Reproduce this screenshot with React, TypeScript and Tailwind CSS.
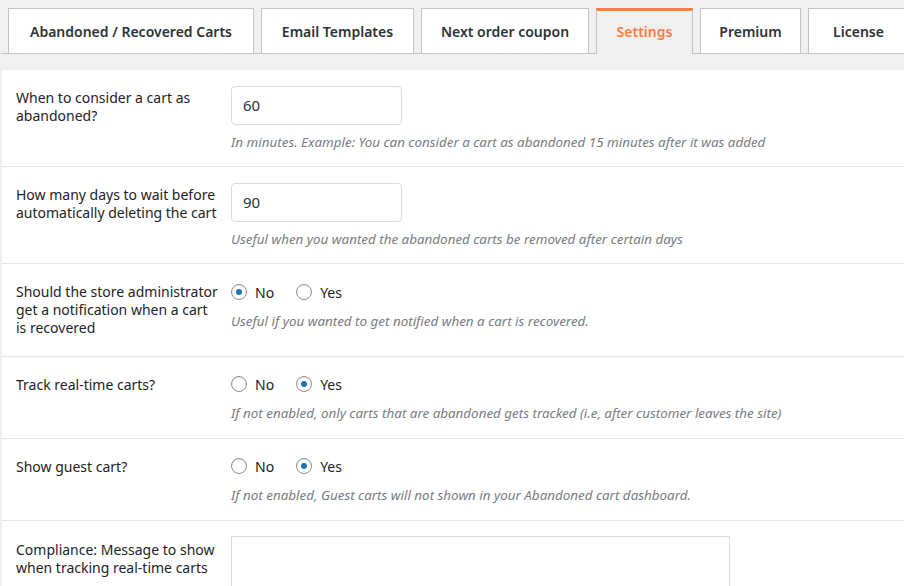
import React from "react";

const font = { fontFamily: '"Noto Sans", "Liberation Sans", sans-serif' };

function Radio({ checked, label }: { checked: boolean; label: string }) {
  return (
    <span className="flex items-center gap-2">
      <span className="w-4 h-4 rounded-full border border-[#8c8f94] bg-white flex items-center justify-center shadow-[inset_0_1px_2px_rgba(0,0,0,0.1)]">
        {checked && <span className="w-[6px] h-[6px] rounded-full bg-[#2271b1]" />}
      </span>
      <span className="text-[14px] text-[#1d2327]">{label}</span>
    </span>
  );
}

function Hint({ children, mt }: { children: React.ReactNode; mt: string }) {
  return <p className={`${mt} text-[13.4px] italic text-[#787c82] leading-[18px] whitespace-nowrap`}>{children}</p>;
}

const labelCls = "w-[229px] shrink-0 pl-[14px] pr-[12px] text-[14px] leading-[18px] text-[#1d2327]";

export default function App() {
  const tabs = [
    { t: "Abandoned / Recovered Carts", w: "w-[246px]" },
    { t: "Email Templates", w: "w-[153px]" },
    { t: "Next order coupon", w: "w-[168px]" },
    { t: "Settings", w: "w-[97px]", active: true },
    { t: "Premium", w: "w-[101px]" },
    { t: "License", w: "w-[101px]" },
  ];
  return (
    <div className="w-[904px] h-[586px] overflow-hidden bg-[#f0f0f1]" style={font}>
      <div className="flex items-end gap-[7px] pl-[7px] pt-2 border-b border-[#c3c4c7] ml-px">
        {tabs.map((tab) =>
          tab.active ? (
            <div
              key={tab.t}
              className={`${tab.w} shrink-0 h-[46px] -mb-px flex items-center justify-center bg-[#f0f0f1] border-x border-[#c3c4c7] border-t-[3px] border-t-[#ff7b40] text-[14px] font-semibold text-[#ff7b40]`}
            >
              <span className="-mt-[2px]">{tab.t}</span>
            </div>
          ) : (
            <div
              key={tab.t}
              className={`${tab.w} shrink-0 h-[46px] -mb-px flex items-center justify-center bg-white border border-[#c3c4c7] text-[14px] font-semibold text-[#2c3338]`}
            >
              {tab.t}
            </div>
          )
        )}
      </div>

      <div className="mt-4 ml-[2px] bg-white">
        {/* Row 1 */}
        <div className="flex border-b border-[#e6e6e6]">
          <div className={`${labelCls} pt-[19px]`}>When to consider a cart as abandoned?</div>
          <div className="pt-[16px] pb-[15px]">
            <div className="w-[171px] h-[39px] border border-[#dcdcde] rounded-[4px] px-[11px] flex items-center text-[15px] text-[#2c3338]">60</div>
            <Hint mt="mt-[8px]">In minutes. Example: You can consider a cart as abandoned 15 minutes after it was added</Hint>
          </div>
        </div>
        {/* Row 2 */}
        <div className="flex border-b border-[#e6e6e6]">
          <div className={`${labelCls} pt-[19px]`}>How many days to wait before automatically deleting the cart</div>
          <div className="pt-[16px] pb-[15px]">
            <div className="w-[171px] h-[39px] border border-[#dcdcde] rounded-[4px] px-[11px] flex items-center text-[15px] text-[#2c3338]">90</div>
            <Hint mt="mt-[8px]">Useful when you wanted the abandoned carts be removed after certain days</Hint>
          </div>
        </div>
        {/* Row 3 */}
        <div className="flex border-b border-[#e6e6e6]">
          <div className={`${labelCls} pt-[19px] pb-[19px]`}>
            Should the store administrator get a notification when a cart is recovered
          </div>
          <div className="pt-[18px]">
            <div className="flex items-center gap-[22px] h-[20px]">
              <Radio checked label="No" />
              <Radio checked={false} label="Yes" />
            </div>
            <Hint mt="mt-[10px]">Useful if you wanted to get notified when a cart is recovered.</Hint>
          </div>
        </div>
        {/* Row 4 */}
        <div className="flex border-b border-[#e6e6e6]">
          <div className={`${labelCls} pt-[19px]`}>Track real-time carts?</div>
          <div className="pt-[17px] pb-[16px]">
            <div className="flex items-center gap-[22px] h-[20px]">
              <Radio checked={false} label="No" />
              <Radio checked label="Yes" />
            </div>
            <Hint mt="mt-[10px]">If not enabled, only carts that are abandoned gets tracked (i.e, after customer leaves the site)</Hint>
          </div>
        </div>
        {/* Row 5 */}
        <div className="flex border-b border-[#e6e6e6]">
          <div className={`${labelCls} pt-[19px]`}>Show guest cart?</div>
          <div className="pt-[17px] pb-[16px]">
            <div className="flex items-center gap-[22px] h-[20px]">
              <Radio checked={false} label="No" />
              <Radio checked label="Yes" />
            </div>
            <Hint mt="mt-[10px]">If not enabled, Guest carts will not shown in your Abandoned cart dashboard.</Hint>
          </div>
        </div>
        {/* Row 6 */}
        <div className="flex">
          <div className={`${labelCls} pt-[20px]`}>Compliance: Message to show when tracking real-time carts</div>
          <div className="pt-[15px]">
            <div className="w-[499px] h-[80px] border border-[#dcdcde]" />
          </div>
        </div>
      </div>
    </div>
  );
}
